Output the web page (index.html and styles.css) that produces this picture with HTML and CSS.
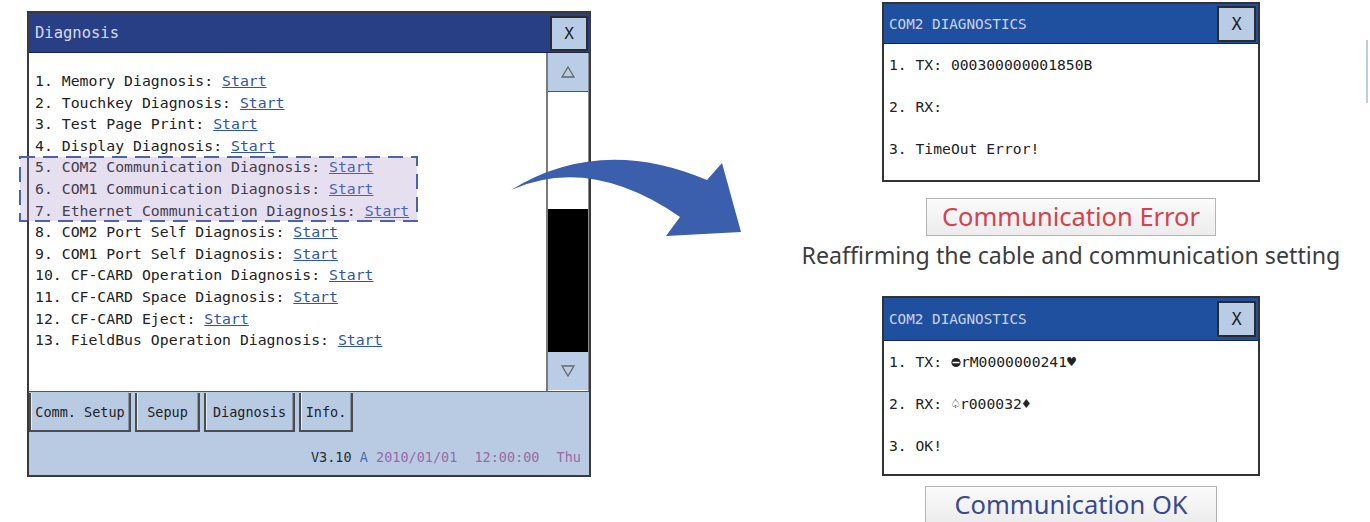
FILE: index.html
```html
<html>
  <head>
    <title>HMI Diagnosis - COM2 Communication</title>
    <link rel="stylesheet" href="styles.css">
  </head>
  <body>
    <div id="page">
      <div class="hmi">
        <div class="hmi-title">
          <span>Diagnosis</span>
          <div class="close-btn">X</div>
        </div>
        <div class="hmi-main">
          <div class="diag-list">
            <div>1. Memory Diagnosis: <a>Start</a></div>
            <div>2. Touchkey Diagnosis: <a>Start</a></div>
            <div>3. Test Page Print: <a>Start</a></div>
            <div>4. Display Diagnosis: <a>Start</a></div>
            <div>5. COM2 Communication Diagnosis: <a>Start</a></div>
            <div>6. COM1 Communication Diagnosis: <a>Start</a></div>
            <div>7. Ethernet Communication Diagnosis: <a>Start</a></div>
            <div>8. COM2 Port Self Diagnosis: <a>Start</a></div>
            <div>9. COM1 Port Self Diagnosis: <a>Start</a></div>
            <div>10. CF-CARD Operation Diagnosis: <a>Start</a></div>
            <div>11. CF-CARD Space Diagnosis: <a>Start</a></div>
            <div>12. CF-CARD Eject: <a>Start</a></div>
            <div>13. FieldBus Operation Diagnosis: <a>Start</a></div>
          </div>
          <div class="scroll">
            <div class="scroll-btn">
              <svg width="14" height="12" viewBox="0 0 14 12"><path d="M7 1 L13 11 L1 11 Z" fill="none" stroke="#666" stroke-width="1.3"/></svg>
            </div>
            <div class="scroll-track"></div>
            <div class="scroll-thumb"></div>
            <div class="scroll-btn">
              <svg width="14" height="12" viewBox="0 0 14 12"><path d="M1 1 L13 1 L7 11 Z" fill="none" stroke="#666" stroke-width="1.3"/></svg>
            </div>
          </div>
        </div>
        <div class="hmi-foot">
          <div class="tabs">
            <div class="tab tab-comm">Comm. Setup</div>
            <div class="tab tab-sepup">Sepup</div>
            <div class="tab tab-diag">Diagnosis</div>
            <div class="tab tab-info">Info.</div>
          </div>
          <div class="status">
            <span class="ver">V3.10</span>
            <span class="mode">A</span>
            <span class="clock">2010/01/01</span>
            <span class="clock gap">12:00:00</span>
            <span class="clock gap">Thu</span>
          </div>
        </div>
      </div>

      <div class="results">
        <div class="dlg">
          <div class="dlg-title">
            <span>COM2 DIAGNOSTICS</span>
            <div class="close-btn small">X</div>
          </div>
          <div class="dlg-body">
            <div>1. TX: 000300000001850B</div>
            <div>2. RX:</div>
            <div>3. TimeOut Error!</div>
          </div>
        </div>
        <div class="verdict error">Communication Error</div>
        <div class="advice">Reaffirming the cable and communication setting</div>
        <div class="dlg second">
          <div class="dlg-title">
            <span>COM2 DIAGNOSTICS</span>
            <div class="close-btn small">X</div>
          </div>
          <div class="dlg-body">
            <div>1. TX: <svg class="glyph" width="10" height="11" viewBox="0 0 10 11"><circle cx="5" cy="5.5" r="4.6" fill="#222"/><rect x="1.5" y="4.8" width="7" height="1.5" fill="#fff"/></svg>rM0000000241<span class="sym">&#9829;</span></div>
            <div>2. RX: <span class="sym">&#9828;</span>r000032<span class="sym">&#9830;</span></div>
            <div>3. OK!</div>
          </div>
        </div>
        <div class="verdict ok">Communication OK</div>
      </div>

      <!-- annotation: highlighted rows 5-7 -->
      <svg class="highlight" width="400" height="67" viewBox="0 0 400 67">
        <rect x="1" y="1" width="397" height="64" fill="rgba(160,135,195,0.27)" stroke="#4b63a9" stroke-width="2" stroke-dasharray="15 8"/>
      </svg>

      <!-- annotation: curved arrow -->
      <svg class="arrow" width="245" height="95" viewBox="0 0 245 95">
        <path d="M6 40 Q95 -15 202 30 L217 13 L236 82 L161 86 L175 67 Q85 5 6 40 Z" fill="#3b5ead"/>
      </svg>

      <div class="edge-line"></div>
    </div>
  </body>
</html>
```

FILE: styles.css
```css
body {
  margin: 0;
  background-color: #FFFFFF;
  font-family: "DejaVu Sans Mono", monospace;
  overflow: hidden;
}

#page {
  position: relative;
  display: flex;
  width: 1370px;
  height: 522px;
  overflow: hidden;
}

/* left HMI screen */
.hmi {
  margin: 11px 0 0 27px;
  width: 564px;
  height: 466px;
  box-sizing: border-box;
  border: 2px solid #3a3a3a;
  display: flex;
  flex-direction: column;
}

.hmi-title {
  height: 40px;
  flex: none;
  box-sizing: border-box;
  background-color: #283f86;
  border-bottom: 1px solid #1b2250;
  display: flex;
  align-items: center;
  justify-content: space-between;
  padding-left: 6px;
  color: #d5dbef;
  font-size: 15.5px;
}

.close-btn {
  width: 38px;
  height: 35px;
  box-sizing: border-box;
  margin-right: 1px;
  margin-top: 2px;
  background-color: #b9cce5;
  border: 2px solid #2b2b2b;
  color: #222;
  font-size: 16px;
  display: flex;
  align-items: center;
  justify-content: center;
}

.hmi-main {
  display: flex;
  height: 338px;
  flex: none;
}

.diag-list {
  flex: 1;
  background-color: #FFFFFF;
  padding: 17px 0 0 6px;
  font-size: 14.8px;
  line-height: 21.6px;
  color: #222;
}

.diag-list a {
  color: #2d56ab;
  text-decoration: underline;
}

.scroll {
  width: 40px;
  border-left: 2px solid #7a7a7a;
  border-right: 1px solid #8a8a8a;
  display: flex;
  flex-direction: column;
}

.scroll-btn {
  height: 38px;
  background-color: #b9cde6;
  display: flex;
  align-items: center;
  justify-content: center;
}

.scroll-btn:first-child {
  border-bottom: 1px solid #555;
}

.scroll-track {
  height: 117px;
  background-color: #FFFFFF;
}

.scroll-thumb {
  height: 143px;
  background-color: #000000;
}

.hmi-foot {
  flex: 1;
  background-color: #b8cbe3;
  border-top: 1px solid #555;
}

.tabs {
  display: flex;
  gap: 4px;
  margin-top: 1px;
}

.tab {
  height: 39px;
  box-sizing: border-box;
  border: 2px solid #4d4d4d;
  border-top: none;
  box-shadow: inset 1px 0 0 #e4ecf6, inset -1px 0 0 #8796ab;
  display: flex;
  align-items: center;
  justify-content: center;
  font-size: 13.5px;
  color: #222;
}

.tab-comm { width: 102px; }
.tab-sepup { width: 65px; }
.tab-diag { width: 91px; }
.tab-info { width: 54px; }

.status {
  margin-top: 15px;
  padding-right: 8px;
  text-align: right;
  font-size: 13.5px;
  line-height: 20px;
  color: #2a2a2a;
}

.status .mode { color: #4a6cb6; }
.status .clock { color: #9a6aa6; }
.status .gap { margin-left: 9px; }

/* right column: results */
.results {
  margin-left: 189px;
  width: 582px;
  display: flex;
  flex-direction: column;
  align-items: center;
}

.dlg {
  margin-top: 2px;
  width: 378px;
  height: 180px;
  flex: none;
  box-sizing: border-box;
  border: 2px solid #333;
  background-color: #FFFFFF;
}

.dlg.second {
  margin-top: 26px;
}

.dlg-title {
  height: 40px;
  box-sizing: border-box;
  background-color: #1f4f9f;
  border-bottom: 1px solid #1a2450;
  display: flex;
  align-items: center;
  justify-content: space-between;
  padding-left: 5px;
  color: #c9d4ec;
  font-size: 14.3px;
}

.dlg.second .dlg-title {
  height: 43px;
}

.close-btn.small {
  width: 39px;
  height: 36px;
  margin: 0 2px 0 0;
  font-size: 17px;
}

.dlg-body {
  padding: 0 0 0 5px;
  font-size: 14.7px;
  line-height: 42px;
  color: #222;
}

.dlg.second .dlg-body {
  padding-top: 0;
  line-height: 42px;
}

.glyph {
  vertical-align: -1px;
}

.sym {
  font-size: 15px;
  line-height: 1;
}

.verdict {
  width: 290px;
  height: 38px;
  flex: none;
  box-sizing: border-box;
  border: 1px solid #b4b4b4;
  background: linear-gradient(#fbfbfb, #ececec);
  font-family: "Noto Sans", sans-serif;
  font-size: 25.5px;
  line-height: 34px;
  text-align: center;
}

.verdict.error {
  margin-top: 16px;
  color: #d2434f;
}

.verdict.ok {
  margin-top: 10px;
  width: 292px;
  color: #3a4a8f;
}

.advice {
  margin-top: 4px;
  font-family: "Noto Sans", sans-serif;
  font-size: 23.2px;
  line-height: 30px;
  color: #3d3d3d;
}

/* annotations over the screens */
.highlight {
  position: absolute;
  left: 19px;
  top: 156px;
}

.arrow {
  position: absolute;
  left: 505px;
  top: 150px;
}

.edge-line {
  position: absolute;
  left: 1366px;
  top: 40px;
  width: 2px;
  height: 63px;
  background-color: #b9cde8;
}
```
